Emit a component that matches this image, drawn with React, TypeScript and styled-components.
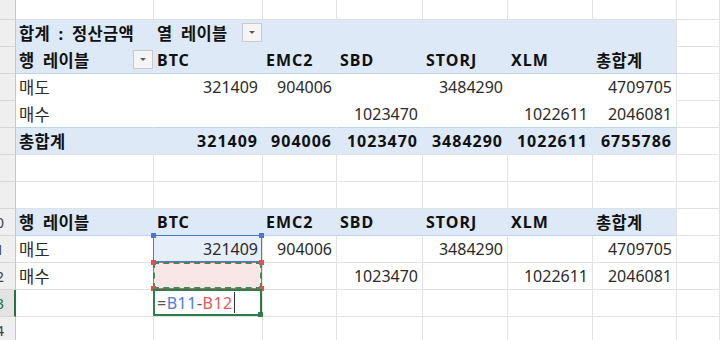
import React from "react";
import styled, { createGlobalStyle } from "styled-components";

const GRID = "#e1e1e1";
const BLUE = "#dde9f6";
const BLUE_LINE = "#bdd4ee";

const GlobalStyle = createGlobalStyle`
  html, body { margin: 0; padding: 0; background: #ffffff; }
  body { font-family: "Noto Sans", "Noto Sans CJK KR", sans-serif; }
`;

const COLS = "16px 138px 109px 74px 86px 85px 85px 84px 43px";

const Sheet = styled.div`
  width: 720px;
  height: 340px;
  overflow: hidden;
  display: flex;
  flex-direction: column;
  font-size: 16px;
  color: #252525;
`;

const Row = styled.div<{ $h: number }>`
  display: grid;
  grid-template-columns: ${COLS};
  height: ${(p) => p.$h}px;
  flex: none;
`;

const RowHead = styled.div<{ $active?: boolean }>`
  box-sizing: border-box;
  background: ${(p) => (p.$active ? "#e3e3e3" : "#efefef")};
  border-bottom: 1px solid #d5d5d5;
  border-right: ${(p) => (p.$active ? "2px solid #217346" : "1px solid #c6c6c6")};
  display: flex;
  justify-content: flex-end;
  align-items: center;
  overflow: hidden;
  padding-right: ${(p) => (p.$active ? "10px" : "11px")};
  font-size: 15px;
  color: ${(p) => (p.$active ? "#217346" : "#444")};
  white-space: nowrap;
`;

const Cell = styled.div<{
  $fill?: string;
  $bottom?: string;
  $right?: string;
  $align?: "left" | "right" | "between";
  $bold?: boolean;
}>`
  position: relative;
  box-sizing: border-box;
  min-width: 0;
  background: ${(p) => p.$fill ?? "#ffffff"};
  border-right: 1px solid ${(p) => p.$right ?? GRID};
  border-bottom: 1px solid ${(p) => p.$bottom ?? GRID};
  display: flex;
  align-items: center;
  justify-content: ${(p) =>
    p.$align === "right" ? "flex-end" : p.$align === "between" ? "space-between" : "flex-start"};
  padding: 0 ${(p) => (p.$align === "between" ? "0" : "4px")} 1px 3px;
  font-weight: ${(p) => (p.$bold ? 700 : 400)};
  letter-spacing: ${(p) => (p.$bold ? "1px" : "0")};
  white-space: nowrap;
  color: ${(p) => (p.$bold ? "#111" : "#2a2a2a")};
`;

const Ko = styled.span`
  font-size: 16.5px;
  letter-spacing: 0.3px;
  word-spacing: 4px;
`;

const DropBtn = styled.span<{ $gap?: number }>`
  width: 20px;
  height: 19px;
  margin-left: ${(p) => p.$gap ?? 0}px;
  box-sizing: border-box;
  border: 1px solid #c9c9c9;
  background: #f5f5f5;
  display: inline-flex;
  align-items: center;
  justify-content: center;
  flex: none;
`;

const Frame = styled.div<{ $color: string; $width: number }>`
  position: absolute;
  top: -1px;
  left: -1px;
  right: 0;
  bottom: 0;
  border: ${(p) => p.$width}px solid ${(p) => p.$color};
  z-index: 2;
  pointer-events: none;
`;

const Dashes = styled.div`
  position: absolute;
  inset: -1px;
  border: 2px dashed #3f8a5c;
`;

const Handle = styled.span<{ $color: string; $x: "l" | "r"; $y: "t" | "b" }>`
  position: absolute;
  width: 5px;
  height: 5px;
  background: ${(p) => p.$color};
  ${(p) => (p.$x === "l" ? "left: -3px;" : "right: -3px;")}
  ${(p) => (p.$y === "t" ? "top: -3px;" : "bottom: -3px;")}
  z-index: 3;
`;

const Formula = styled.span`
  display: inline-flex;
  align-items: center;
  position: relative;
  z-index: 4;
  letter-spacing: 0.5px;
`;

const Ref = styled.span<{ $color: string }>`
  color: ${(p) => p.$color};
`;

const Caret = styled.span`
  display: inline-block;
  width: 1px;
  height: 21px;
  background: #333;
  margin-left: 1px;
`;

const Arrow = () => (
  <svg width="8" height="5" viewBox="0 0 8 5">
    <path d="M1 1 L4 4 L7 1 Z" fill="#5a5a5a" />
  </svg>
);

const COINS = ["BTC", "EMC2", "SBD", "STORJ", "XLM", "총합계"];
const SELL = ["321409", "904006", "", "3484290", "", "4709705"];
const BUY = ["", "", "1023470", "", "1022611", "2046081"];
const TOTAL = ["321409", "904006", "1023470", "3484290", "1022611", "6755786"];

const Label = ({ text }: { text: string }) =>
  /[\uac00-\ud7a3]/.test(text) ? <Ko>{text}</Ko> : <>{text}</>;

const Blank = ({ n }: { n: number }) => (
  <>
    {Array.from({ length: n }).map((_, i) => (
      <Cell key={i} />
    ))}
  </>
);

export default function App() {
  return (
    <>
      <GlobalStyle />
      <Sheet>
        <Row $h={20}>
          <RowHead />
          <Blank n={8} />
        </Row>

        {/* pivot title row */}
        <Row $h={27}>
          <RowHead />
          <Cell $fill={BLUE} $right={BLUE} $bottom={BLUE} $bold>
            <Ko>합계 : 정산금액</Ko>
          </Cell>
          <Cell $fill={BLUE} $right={BLUE} $bottom={BLUE} $bold>
            <Ko>열 레이블</Ko>
            <DropBtn $gap={14}>
              <Arrow />
            </DropBtn>
          </Cell>
          {[0, 1, 2, 3, 4].map((i) => (
            <Cell key={i} $fill={BLUE} $right={i === 4 ? GRID : BLUE} $bottom={BLUE} />
          ))}
          <Cell />
        </Row>

        {/* pivot header */}
        <Row $h={27}>
          <RowHead />
          <Cell $fill={BLUE} $right={BLUE} $bottom={BLUE_LINE} $bold $align="between">
            <Ko>행 레이블</Ko>
            <DropBtn>
              <Arrow />
            </DropBtn>
          </Cell>
          {COINS.map((c, i) => (
            <Cell key={c} $fill={BLUE} $right={i === 5 ? GRID : BLUE} $bottom={BLUE_LINE} $bold>
              <Label text={c} />
            </Cell>
          ))}
          <Cell />
        </Row>

        <Row $h={27}>
          <RowHead />
          <Cell $right="#fff" $bottom="#fff">
            <Ko>매도</Ko>
          </Cell>
          {SELL.map((v, i) => (
            <Cell key={i} $align="right" $right={i === 5 ? GRID : "#fff"} $bottom="#fff">
              {v}
            </Cell>
          ))}
          <Cell />
        </Row>

        <Row $h={27}>
          <RowHead />
          <Cell $right="#fff" $bottom={BLUE_LINE}>
            <Ko>매수</Ko>
          </Cell>
          {BUY.map((v, i) => (
            <Cell key={i} $align="right" $right={i === 5 ? GRID : "#fff"} $bottom={BLUE_LINE}>
              {v}
            </Cell>
          ))}
          <Cell />
        </Row>

        <Row $h={27}>
          <RowHead />
          <Cell $fill={BLUE} $right={BLUE} $bold>
            <Ko>총합계</Ko>
          </Cell>
          {TOTAL.map((v, i) => (
            <Cell key={i} $fill={BLUE} $right={i === 5 ? GRID : BLUE} $align="right" $bold>
              {v}
            </Cell>
          ))}
          <Cell />
        </Row>

        <Row $h={27}>
          <RowHead />
          <Blank n={8} />
        </Row>
        <Row $h={27}>
          <RowHead />
          <Blank n={8} />
        </Row>

        {/* second table header, row 10 */}
        <Row $h={27}>
          <RowHead>10</RowHead>
          <Cell $fill={BLUE} $right={BLUE} $bottom={BLUE_LINE} $bold>
            <Ko>행 레이블</Ko>
          </Cell>
          {COINS.map((c, i) => (
            <Cell key={c} $fill={BLUE} $right={i === 5 ? GRID : BLUE} $bottom={BLUE_LINE} $bold>
              <Label text={c} />
            </Cell>
          ))}
          <Cell />
        </Row>

        {/* row 11 */}
        <Row $h={27}>
          <RowHead>11</RowHead>
          <Cell>
            <Ko>매도</Ko>
          </Cell>
          {SELL.map((v, i) =>
            i === 0 ? (
              <Cell key={i} $align="right" $fill="#e6eef9">
                <Frame $color="#4a78d0" $width={1}>
                  <Handle $color="#4a78d0" $x="l" $y="t" />
                  <Handle $color="#4a78d0" $x="r" $y="t" />
                </Frame>
                {v}
              </Cell>
            ) : (
              <Cell key={i} $align="right">
                {v}
              </Cell>
            )
          )}
          <Cell />
        </Row>

        {/* row 12 */}
        <Row $h={27}>
          <RowHead>12</RowHead>
          <Cell>
            <Ko>매수</Ko>
          </Cell>
          {BUY.map((v, i) =>
            i === 0 ? (
              <Cell key={i} $align="right" $fill="#f9e6e6">
                <Frame $color="#e06060" $width={1}>
                  <Dashes />
                  <Handle $color="#e05050" $x="l" $y="t" />
                  <Handle $color="#e05050" $x="r" $y="t" />
                  <Handle $color="#e05050" $x="l" $y="b" />
                  <Handle $color="#e05050" $x="r" $y="b" />
                </Frame>
              </Cell>
            ) : (
              <Cell key={i} $align="right">
                {v}
              </Cell>
            )
          )}
          <Cell />
        </Row>

        {/* row 13: editing cell */}
        <Row $h={27}>
          <RowHead $active>13</RowHead>
          <Cell />
          <Cell>
            <Frame $color="#2f7d4f" $width={2}>
              <Handle $color="#2f7d4f" $x="r" $y="b" />
            </Frame>
            <Formula>
              <Ref $color="#555">=</Ref>
              <Ref $color="#4a7fd8">B11</Ref>
              <Ref $color="#555">-</Ref>
              <Ref $color="#e05858">B12</Ref>
              <Caret />
            </Formula>
          </Cell>
          <Blank n={6} />
        </Row>

        <Row $h={27}>
          <RowHead>14</RowHead>
          <Blank n={8} />
        </Row>
      </Sheet>
    </>
  );
}
